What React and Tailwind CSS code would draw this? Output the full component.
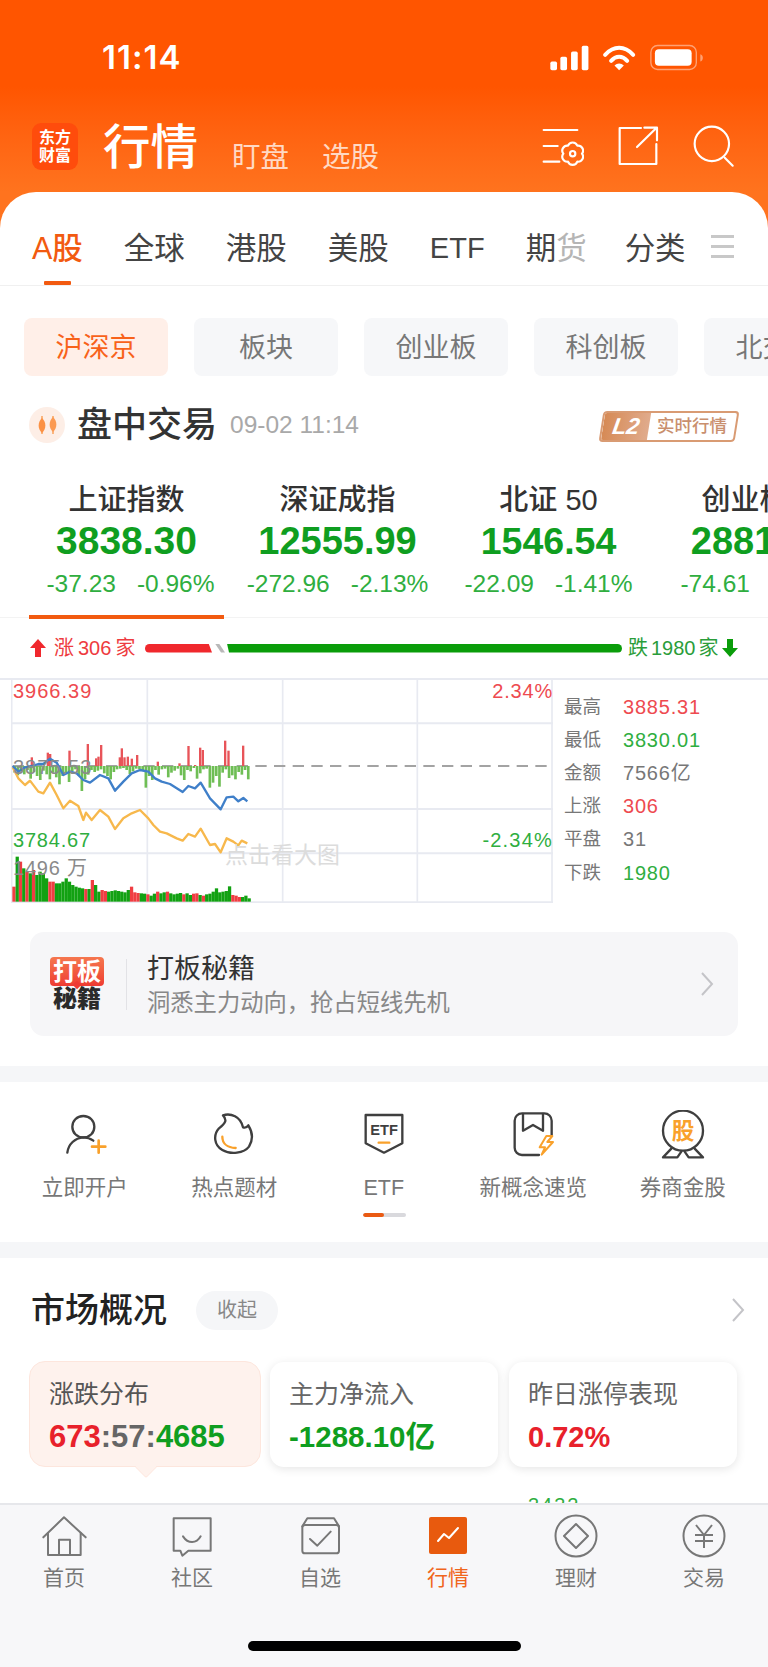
import React from "react";

const ink = "#3f3f3f";
const amber = "#f9a12b";

const pills = ["板块", "创业板", "科创板", "北交所"];
const indices = [
  { name: "上证指数", value: "3838.30", diff: "-37.23", pct: "-0.96%", active: true, nudge: "pl-[8px]", size: "text-[39px]" },
  { name: "深证成指", value: "12555.99", diff: "-272.96", pct: "-2.13%", nudge: "", size: "text-[38px]" },
  { name: "北证 50", value: "1546.54", diff: "-22.09", pct: "-1.41%", nudge: "", size: "text-[37.5px]" },
  { name: "创业板指", value: "2881.08", diff: "-74.61", pct: "-2.52%", nudge: "pl-[10px]", size: "text-[38px]" },
];
const stats = [
  ["最高", "3885.31", "text-[#ee4a4f]"],
  ["最低", "3830.01", "text-[#2fae3f]"],
  ["金额", "7566亿", "text-[#777777]"],
  ["上涨", "306", "text-[#ee4a4f]"],
  ["平盘", "31", "text-[#777777]"],
  ["下跌", "1980", "text-[#2fae3f]"],
];

// Intraday series, in chart units
const bluePts = "38,318 55,335 75,322 95,318 115,312 130,312 150,296 170,308 190,345 210,335 230,340 250,360 270,368 300,345 325,355 345,392 370,365 395,340 420,330 445,335 465,355 485,365 510,372 548,396 565,378 585,385 602,368 630,415 662,448 680,412 700,410 715,424 730,414 742,424";
const yellowPts = "38,322 55,355 75,375 90,362 115,395 130,400 150,368 170,405 190,445 210,422 235,438 250,480 258,458 275,480 300,450 325,470 345,507 370,475 395,460 420,450 445,475 460,495 480,515 500,520 530,535 548,542 565,522 585,530 602,506 630,555 645,552 662,577 680,535 700,545 715,556 725,542 742,550";
const upBars = [[92,292],[140,278],[147,282],[205,272],[260,252],[285,295],[292,290],[300,255],[356,292],[362,265],[370,292],[380,290],[392,296],[408,285],[470,305],[535,310],[562,258],[582,315],[597,263],[605,270],[672,242],[682,272],[726,257]];
const downDepths = [20,28,14,25,12,38,18,30,42,14,25,40,20,34,55,30,22,48,16,10,28,75,40,26,12,18,14,10,22,30,40,18,10,8,6,12,24,16,8,10,14,65,30,42,12,26,10,8,34,20,14,8,28,42,12,16,6,38,22,10,8,65,50,30,62,20,10,36,28,40,18,26,12,40];
const volumes = [45,135,120,100,90,85,95,80,90,85,70,60,60,55,55,60,70,60,50,45,42,40,38,38,65,50,30,35,32,30,32,34,32,30,28,35,45,28,26,25,24,22,18,24,30,25,28,30,25,22,24,26,22,25,20,24,25,20,18,22,24,30,40,28,30,32,46,20,18,14,14,18,10];
const redVolumes = [0, 2, 4, 6, 11, 12, 22, 24, 27, 28, 36, 37, 38, 41, 44, 47, 52, 55, 56, 58, 67, 68, 69];

function Wave({ d, w = 7 }) {
  return <path d={d} fill="none" stroke={ink} strokeWidth={w} strokeLinecap="round" strokeLinejoin="round" />;
}

function StatusIcons() {
  return (
    <svg viewBox="85 40 470 80" width="157" height="27" fill="#fff">
      <rect x="92" y="92" width="20" height="26" rx="5" />
      <rect x="122" y="78" width="20" height="40" rx="5" />
      <rect x="154" y="62" width="20" height="56" rx="5" />
      <rect x="186" y="45" width="20" height="73" rx="5" />
      <path d="M256 72 C282 44 314 44 340 72" fill="none" stroke="#fff" strokeWidth="12" strokeLinecap="round" />
      <path d="M274 90 C288 74 308 74 322 90" fill="none" stroke="#fff" strokeWidth="12" strokeLinecap="round" />
      <path d="M284 104 C292 96 304 96 312 104 L298 118 Z" />
      <rect x="393" y="44" width="136" height="72" rx="20" fill="none" stroke="#ffffff" strokeOpacity="0.45" strokeWidth="4" />
      <rect x="405" y="55" width="110" height="50" rx="12" />
      <path d="M541 70 C550 72 552 88 541 92 Z" fillOpacity="0.45" />
    </svg>
  );
}

function MarketCogIcon() {
  return (
    <svg viewBox="60 290 132 120" width="44" height="40" fill="none" stroke="#fff" strokeWidth="6.5" strokeLinecap="round" strokeLinejoin="round">
      <path d="M71 302 H172 M71 350 H113 M71 397 H118" />
      <path d="M130 373 A15 15 0 0 1 144 349 A15 15 0 0 1 172 349 A15 15 0 0 1 186 373 A15 15 0 0 1 172 397 A15 15 0 0 1 144 397 A15 15 0 0 1 130 373 Z" />
      <circle cx="158" cy="373" r="8" />
    </svg>
  );
}

function ShareIcon() {
  return (
    <svg viewBox="290 288 126 126" width="42" height="42" fill="none" stroke="#fff" strokeWidth="6.5" strokeLinecap="round" strokeLinejoin="round">
      <path d="M362 297 H298 V405 H408 V345" />
      <path d="M350 354 L408 297 M372 296 H410 V334" />
    </svg>
  );
}

function SearchIcon() {
  return (
    <svg viewBox="515 285 130 130" width="43" height="43" fill="none" stroke="#fff" strokeWidth="6.5" strokeLinecap="round">
      <circle cx="575" cy="342" r="52" />
      <path d="M614 384 L638 408" />
    </svg>
  );
}

function CandleIcon() {
  return (
    <svg viewBox="0 0 36 36" width="36" height="36">
      <circle cx="18" cy="18" r="18" fill="#fdeee6" />
      <path d="M13 9 V27 M24 9 V27" stroke="#f9a25c" strokeWidth="1.5" />
      <path d="M13 11 C17.5 15 17.5 22 13 26 C8.5 22 8.5 15 13 11 Z" fill="#fb9144" />
      <path d="M24 10 C28.5 14 28.5 21 24 25 C19.5 21 19.5 14 24 10 Z" fill="#fb9a52" />
    </svg>
  );
}

function Arrow({ up, color }) {
  return (
    <svg viewBox="0 0 16 18" width="16" height="18" fill={color}>
      <path d={up ? "M8 0 L16 9 H11 V18 H5 V9 H0 Z" : "M8 18 L16 9 H11 V0 H5 V9 H0 Z"} />
    </svg>
  );
}

function Chevron({ className }) {
  return (
    <svg viewBox="0 0 14 24" width="14" height="24" className={className} fill="none" stroke="#c4c4c8" strokeWidth="2">
      <path d="M2 1 L12 12 L2 23" />
    </svg>
  );
}

function IntradayChart() {
  const grid = "#e8eaf1";
  return (
    <div className="relative h-[223px] w-[542px] shrink-0 overflow-hidden">
      <svg viewBox="33 60 1626 669" width="542" height="223" className="block">
        <g stroke={grid} strokeWidth="5" fill="none">
          <path d="M35 60 V729 M442 60 V726 M848 60 V726 M1252 60 V726 M1656 60 V729" />
          <path d="M33 190 H1659 M33 447 H1659 M33 580 H1659 M33 727 H1659" strokeWidth="6" />
        </g>
        <path d="M38 318 H1656" stroke="#a3a3a3" strokeWidth="6" strokeDasharray="34 22" />
        {downDepths.map((d, i) => (
          <rect key={i} x={40 + i * 9.6} y="318" width="8" height={d} fill="#6fbe55" />
        ))}
        {upBars.map(([x, top]) => (
          <rect key={x} x={x} y={top} width="7" height={318 - top} fill="#e85459" />
        ))}
        {volumes.map((h, i) => (
          <rect key={i} x={37 + i * 9.8} y={725 - h} width="9.8" height={h} fill={redVolumes.includes(i) ? "#f03d42" : "#12a112"} />
        ))}
        <polyline points={yellowPts} fill="none" stroke="#f7b84c" strokeWidth="7" strokeLinejoin="round" />
        <polyline points={bluePts} fill="none" stroke="#3f7fc9" strokeWidth="7" strokeLinejoin="round" />
      </svg>
      <span className="absolute left-[2px] top-[1px] text-[20px] leading-[20px] tracking-[1px] text-[#ee4a4f]">3966.39</span>
      <span className="absolute left-[2px] top-[77px] text-[20px] leading-[20px] tracking-[1px] text-[#8a8a8a]">3875.53</span>
      <span className="absolute left-[2px] top-[150px] text-[20px] leading-[20px] tracking-[0.8px] text-[#2fae3f]">3784.67</span>
      <span className="absolute right-0 top-[1px] text-[20px] leading-[20px] tracking-[0.8px] text-[#ee4a4f]">2.34%</span>
      <span className="absolute right-0 top-[150px] text-[20px] leading-[20px] tracking-[1.2px] text-[#2fae3f]">-2.34%</span>
      <span className="absolute left-[2px] top-[178px] text-[20px] leading-[20px] tracking-[0.8px] text-[#8a8a8a]">1496 万</span>
      <span className="absolute left-[214px] top-[163px] text-[23px] leading-[24px] text-[#dcdcdc]">点击看大图</span>
    </div>
  );
}

const shortcuts = [
  {
    label: "立即开户",
    icon: (
      <svg viewBox="60 30 150 150" width="50" height="50">
        <Wave d="M130 48 C150 48 163 63 163 80 C163 98 150 112 130 112 C110 112 97 98 97 80 C97 63 110 48 130 48 Z" />
        <Wave d="M82 158 C85 132 105 114 130 112 C142 112 152 116 160 122" />
        <path d="M176 122 V158 M156 140 H196" stroke={amber} strokeWidth="8" strokeLinecap="round" />
      </svg>
    ),
  },
  {
    label: "热点题材",
    icon: (
      <svg viewBox="510 30 150 150" width="50" height="50">
        <Wave d="M552 46 C575 38 605 50 612 82 C622 85 628 76 628 76 C640 95 645 115 630 140 C615 160 575 165 550 150 C525 135 522 105 540 85 C560 70 565 60 552 46 Z" />
        <path d="M550 110 C550 130 565 143 590 144" fill="none" stroke={amber} strokeWidth="7" strokeLinecap="round" />
      </svg>
    ),
  },
  {
    label: "ETF",
    icon: (
      <svg viewBox="55 30 150 150" width="50" height="50">
        <Wave d="M75 45 H185 V130 L130 158 L75 130 Z" />
        <text x="130" y="106" textAnchor="middle" fontSize="44" fontWeight="700" fill={ink}>ETF</text>
        <path d="M114 128 H146" stroke={amber} strokeWidth="7" strokeLinecap="round" />
      </svg>
    ),
  },
  {
    label: "新概念速览",
    icon: (
      <svg viewBox="503 30 150 150" width="50" height="50">
        <Wave d="M596 165 H545 A22 22 0 0 1 523 143 V62 A22 22 0 0 1 545 40 H612 A22 22 0 0 1 634 62 V106" />
        <Wave d="M548 42 V92 L578 75 L608 92 V42" />
        <path d="M618 108 L598 142 H614 L604 164 L638 126 H621 L636 108 Z" fill="#fff" stroke={amber} strokeWidth="6" strokeLinejoin="round" />
      </svg>
    ),
  },
  {
    label: "券商金股",
    icon: (
      <svg viewBox="950 30 150 150" width="50" height="50">
        <circle cx="1025" cy="92" r="60" fill="none" stroke={ink} strokeWidth="7" />
        <text x="1025" y="117" textAnchor="middle" fontSize="68" fontWeight="700" fill={amber}>股</text>
        <Wave d="M990 146 L965 172 H1008 L1020 155" />
        <Wave d="M1060 146 L1085 172 H1042 L1030 155" />
      </svg>
    ),
  },
];

const navStroke = { fill: "none", stroke: "#777", strokeWidth: 6, strokeLinejoin: "round", strokeLinecap: "round" };

const navItems = [
  {
    label: "首页",
    icon: (
      <svg viewBox="25 25 150 135" width="50" height="45" {...navStroke}>
        <path d="M38 95 L100 35 L165 95" />
        <path d="M52 82 V148 H150 V82 M85 148 V102 H118 V148" />
      </svg>
    ),
  },
  {
    label: "社区",
    icon: (
      <svg viewBox="412 25 150 135" width="50" height="45" {...navStroke}>
        <path d="M432 38 H543 V135 H476 L458 150 L452 135 H432 Z" />
        <path d="M460 92 C475 115 500 115 513 92" />
      </svg>
    ),
  },
  {
    label: "自选",
    icon: (
      <svg viewBox="793 25 150 135" width="50" height="45" {...navStroke}>
        <rect x="815" y="58" width="110" height="85" rx="8" />
        <path d="M815 62 L830 38 H910 L925 62 M838 100 L860 120 L900 78" />
      </svg>
    ),
  },
  {
    label: "行情",
    active: true,
    icon: (
      <svg viewBox="0 0 50 45" width="50" height="45">
        <rect x="6" y="3" width="38" height="37" rx="2" fill="#e85a0e" />
        <path d="M15 27 L21 20 L26 24 L35 14" fill="none" stroke="#fff" strokeWidth="2" strokeLinecap="round" strokeLinejoin="round" />
      </svg>
    ),
  },
  {
    label: "理财",
    icon: (
      <svg viewBox="0 0 50 45" width="50" height="45" fill="none" stroke="#777" strokeWidth="2">
        <circle cx="25" cy="22" r="20.5" />
        <path d="M25 10 L37 22 L25 34 L13 22 Z" strokeLinejoin="round" />
      </svg>
    ),
  },
  {
    label: "交易",
    icon: (
      <svg viewBox="0 0 50 45" width="50" height="45" fill="none" stroke="#777" strokeWidth="2">
        <circle cx="25" cy="22" r="20.5" />
        <path d="M17 11 L25 21 L33 11 M16 21 H34 M16 27 H34 M25 21 V34" />
      </svg>
    ),
  },
];

export default function App() {
  return (
    <div className="flex h-[1667px] w-[768px] flex-col overflow-hidden bg-white [font-family:'Liberation_Sans','Noto_Sans_CJK_SC',sans-serif]">
      <main className="min-h-0 flex-1 overflow-hidden">
        <header className="h-[192px] bg-linear-to-b from-[#ff5500] from-45% to-[#ff731e]">
          <div className="flex h-[70px] items-center justify-between pl-[102px] pr-[63px] pt-[44px]">
            <span className="text-[33px] font-semibold leading-none tracking-[1px] text-white [font-family:Inter,sans-serif]">11:14</span>
            <StatusIcons />
          </div>
          <div className="mt-[54px] flex h-[48px] items-end pl-[32px] pr-[33px]">
            <div className="mb-[2px] flex h-[47px] w-[46px] flex-col items-center justify-center rounded-[9px] bg-[#ff4c0c] text-[16px] font-bold leading-[18px] text-white">
              <span>东方</span>
              <span>财富</span>
            </div>
            <h1 className="ml-[25px] text-[47.5px] font-medium leading-[48px] text-white">行情</h1>
            <span className="ml-[34px] text-[28.5px] leading-[30px] text-white/75">盯盘</span>
            <span className="ml-[33px] text-[28.5px] leading-[30px] text-white/75">选股</span>
            <div className="ml-auto mb-[4px] flex items-center gap-[33px] self-center">
              <MarketCogIcon />
              <ShareIcon />
              <SearchIcon />
            </div>
          </div>
        </header>

        <div className="bg-[#ff731e]">
          <nav className="flex h-[94px] items-start rounded-t-[36px] border-b border-[#f0f0f0] bg-white pl-[32px] pt-[38px] text-[30.5px] leading-[36px] text-[#444444]">
            <span className="relative h-[55px] font-medium text-[#f25a10]">
              A股
              <i className="absolute bottom-0 left-[12px] h-[4px] w-[27px] rounded-[1px] bg-[#f25a10]" />
            </span>
            <div className="ml-[41px] flex gap-[41px]">
              <span>全球</span>
              <span>港股</span>
              <span>美股</span>
              <span className="text-[29px]">ETF</span>
              <span>
                期<span className="text-[#b5b5b5]">货</span>
              </span>
            </div>
            <span className="ml-[38px]">分类</span>
            <div className="ml-[25px] mt-[5px] flex h-[23px] w-[23px] flex-col justify-between">
              <i className="h-[3px] bg-[#c8c8c8]" />
              <i className="h-[3px] bg-[#c8c8c8]" />
              <i className="h-[3px] bg-[#c8c8c8]" />
            </div>
          </nav>
        </div>

        <div className="flex gap-[26px] pl-[24px] pt-[32px]">
          <button className="h-[58px] w-[144px] shrink-0 rounded-[8px] bg-[#ffefe8] pt-[3px] text-[27px] text-[#f8621a]">沪深京</button>
          {pills.map((p) => (
            <button key={p} className="h-[58px] w-[144px] shrink-0 rounded-[8px] bg-[#f6f7f9] pt-[3px] text-[27px] text-[#777777]">
              {p}
            </button>
          ))}
        </div>

        <div className="mt-[31px] flex h-[36px] items-center pl-[29px] pr-[31px]">
          <CandleIcon />
          <h2 className="ml-[12px] text-[35px] font-medium leading-[36px] text-[#333333]">盘中交易</h2>
          <span className="ml-[13px] text-[24.5px] text-[#a9a9a9]">09-02 11:14</span>
          <div className="ml-auto mt-[2px] flex h-[31px] w-[136px] -skew-x-[9deg] overflow-hidden rounded-[4px] border-2 border-[#d99b73] bg-white">
            <span className="flex w-[46px] items-center justify-center bg-linear-to-r from-[#d68a55] to-[#e0ab8c] text-[23px] font-bold italic leading-none text-white">L2</span>
            <span className="flex flex-1 skew-x-[9deg] items-center justify-center text-[17.5px] font-medium text-[#c98f6e]">实时行情</span>
          </div>
        </div>

        <div className="flex h-[175px] w-[768px] border-b border-[#f3f3f3] pl-[21px]">
          {indices.map((x) => (
            <div key={x.name} className="relative flex h-[175px] w-[211px] shrink-0 flex-col items-center whitespace-nowrap pt-[40px]">
              <span className="h-[34px] text-[29px] font-medium leading-[34px] text-[#333333]">{x.name}</span>
              <span className={`h-[48px] font-bold leading-[48px] text-[#0f9e20] ${x.size}`}>{x.value}</span>
              <span className={`flex h-[38px] items-center gap-[21px] text-[24.5px] text-[#2fae3f] ${x.nudge}`}>
                <span>{x.diff}</span>
                <span>{x.pct}</span>
              </span>
              {x.active && <i className="absolute bottom-[-1px] left-[8px] h-[4px] w-[195px] bg-[#f25a10]" />}
            </div>
          ))}
        </div>

        <div className="flex h-[60px] items-center pl-[30px] text-[20px] whitespace-nowrap">
          <Arrow up color="#f0282d" />
          <span className="ml-[8px] w-[91px] text-[#ee3b40]">
            涨<span className="mx-[4px]">306</span>家
          </span>
          <i className="h-[9px] w-[67px] rounded-l-full bg-[#f0282d] [clip-path:polygon(0_0,95%_0,100%_100%,0_100%)]" />
          <i className="ml-[3px] h-[9px] w-[10px] bg-[#b9b9b9] [clip-path:polygon(0_0,40%_0,100%_100%,60%_100%)]" />
          <i className="ml-[2px] h-[9px] w-[395px] rounded-r-full bg-[#0a9d0a] [clip-path:polygon(0_0,100%_0,100%_100%,2px_100%)]" />
          <span className="ml-[6px] w-[94px] text-[#2a9d3a]">
            跌<span className="mx-[3px]">1980</span>家
          </span>
          <Arrow color="#0a9d0a" />
        </div>

        <div className="flex h-[226px] border-t-2 border-[#e8eaf1] pl-[11px]">
          <IntradayChart />
          <dl className="flex flex-col pl-[11px] pt-[10px]">
            {stats.map(([k, v, c]) => (
              <div key={k} className="flex h-[33.2px] items-center">
                <dt className="w-[59px] text-[18.5px] text-[#777777]">{k}</dt>
                <dd className={`text-[20px] tracking-[0.8px] ${c}`}>{v}</dd>
              </div>
            ))}
          </dl>
        </div>

        <section className="mx-[30px] mt-[28px] flex h-[104px] items-center rounded-[14px] bg-[#f6f6f8] pl-[20px] pr-[24px]">
          <div className="flex w-[54px] flex-col items-center">
            <span className="relative h-[29px] w-[54px] rounded-[4px] bg-linear-to-b from-[#f5764e] to-[#ee3a32] text-center text-[24px] font-bold leading-[29px] text-white">
              打板
              <i className="absolute bottom-[-2px] left-[24px] h-[6px] w-[6px] rotate-45 bg-[#ee3a32]" />
            </span>
            <span className="mt-[1px] text-[24px] font-black leading-[24px] text-[#2b2b2b]">秘籍</span>
          </div>
          <i className="ml-[22px] h-[51px] w-px bg-[#e2e2e6]" />
          <div className="ml-[20px] flex flex-col pt-[4px]">
            <span className="text-[27px] leading-[34px] text-[#333333]">打板秘籍</span>
            <span className="text-[23.3px] leading-[34px] text-[#888888]">洞悉主力动向，抢占短线先机</span>
          </div>
          <Chevron className="ml-auto" />
        </section>

        <div className="mt-[30px] h-[16px] bg-[#f5f6f8]" />

        <div className="h-[160px] pt-[28px]">
          <div className="flex pl-[10px]">
            {shortcuts.map((s) => (
              <div key={s.label} className="flex w-[149.5px] flex-col items-center">
                {s.icon}
                <span className="mt-[14px] text-[21.5px] leading-[28px] text-[#777777]">{s.label}</span>
              </div>
            ))}
          </div>
          <div className="ml-[363px] mt-[11px] h-[4px] w-[43px] overflow-hidden rounded-full bg-[#d9d9dd]">
            <div className="h-full w-[21px] rounded-full bg-[#ea5a12]" />
          </div>
        </div>

        <div className="h-[16px] bg-[#f5f6f8]" />

        <div className="flex h-[104px] items-center pl-[31px] pr-[23px]">
          <h2 className="text-[34px] font-medium leading-[40px] text-[#222222]">市场概况</h2>
          <span className="ml-[29px] flex h-[39px] w-[82px] items-center justify-center rounded-full bg-[#f5f6f8] text-[20px] text-[#888888]">收起</span>
          <Chevron className="ml-auto" />
        </div>

        <div className="-mt-px flex pl-[29px]">
          <div className="relative h-[106px] w-[232px] rounded-[16px] border border-[#fde6dd] bg-[#fef2ed] pl-[19px] pt-[15px]">
            <p className="text-[25px] leading-[34px] text-[#555555]">涨跌分布</p>
            <p className="mt-[9px] text-[31px] font-bold leading-[34px] text-[#666666]">
              <span className="text-[#e8212b]">673</span>:57:<span className="text-[#0f9e20]">4685</span>
            </p>
            <i className="absolute bottom-[-9px] left-[108px] h-[16px] w-[16px] rotate-45 rounded-[2px] border-b border-r border-[#fde6dd] bg-[#fef2ed]" />
          </div>
          <div className="ml-[9px] mt-px h-[105px] w-[228px] rounded-[14px] bg-white pl-[19px] pt-[15px] shadow-[0_2px_10px_rgba(0,0,0,0.1)]">
            <p className="text-[25px] leading-[34px] text-[#666666]">主力净流入</p>
            <p className="mt-[9px] text-[29.5px] font-bold leading-[34px] text-[#0f9e20]">-1288.10亿</p>
          </div>
          <div className="ml-[11px] mt-px h-[105px] w-[228px] rounded-[14px] bg-white pl-[19px] pt-[15px] shadow-[0_2px_10px_rgba(0,0,0,0.1)]">
            <p className="text-[25px] leading-[34px] text-[#666666]">昨日涨停表现</p>
            <p className="mt-[9px] text-[29px] font-bold leading-[34px] text-[#e8212b]">0.72%</p>
          </div>
        </div>

        <p className="ml-[528px] mt-[26px] text-[20px] leading-[24px] tracking-[2px] text-[#2fae3f]">3432</p>
      </main>

      <nav className="h-[164px] shrink-0 border-t-2 border-[#e6e7eb] bg-[#f7f7f9]">
        <div className="flex pt-[9px]">
          {navItems.map((n) => (
            <div key={n.label} className="flex w-[128px] flex-col items-center">
              {n.icon}
              <span className={`mt-[5px] text-[21px] leading-[28px] ${n.active ? "text-[#f0651c]" : "text-[#777777]"}`}>{n.label}</span>
            </div>
          ))}
        </div>
        <div className="mx-auto mt-[49px] h-[10px] w-[273px] rounded-full bg-black" />
      </nav>
    </div>
  );
}
